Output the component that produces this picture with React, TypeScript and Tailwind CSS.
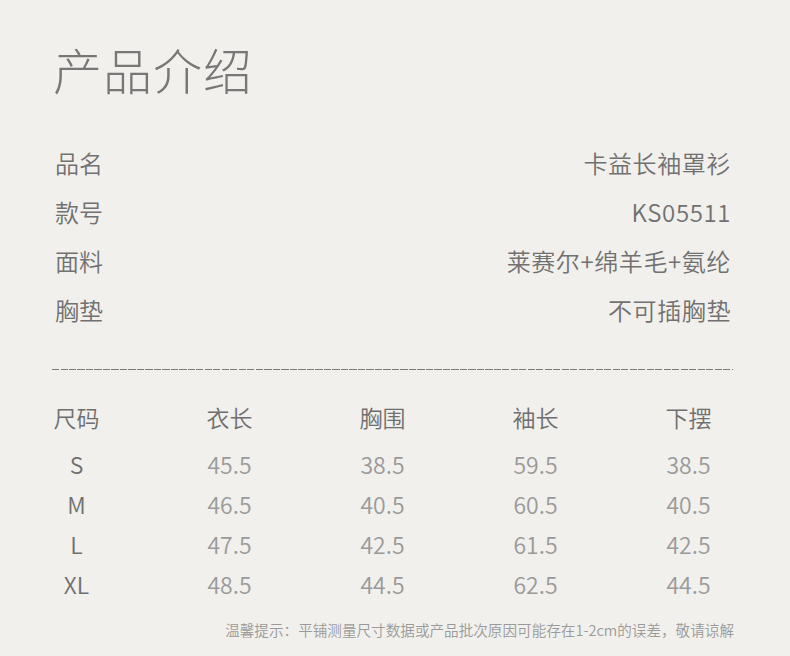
const info = [
  { label: "品名", value: "卡益长袖罩衫" },
  { label: "款号", value: "KS05511" },
  { label: "面料", value: "莱赛尔+绵羊毛+氨纶" },
  { label: "胸垫", value: "不可插胸垫" },
];

const headers = ["尺码", "衣长", "胸围", "袖长", "下摆"];

const sizes = [
  ["S", "45.5", "38.5", "59.5", "38.5"],
  ["M", "46.5", "40.5", "60.5", "40.5"],
  ["L", "47.5", "42.5", "61.5", "42.5"],
  ["XL", "48.5", "44.5", "62.5", "44.5"],
];

export default function App() {
  return (
    <div
      className="h-[656px] w-[790px] overflow-hidden bg-[#f1f0ec] font-[350]"
      style={{ fontFamily: '"Noto Sans CJK SC", "Noto Sans", sans-serif' }}
    >
      {/* Title */}
      <h1 className="pl-[53px] pt-[45px] text-[49px] font-light leading-[48px] tracking-[1px] text-[#777777]">
        产品介绍
      </h1>

      {/* Product info */}
      <div className="mt-[45px] pl-[55px] pr-[59px]">
        {info.map((row) => (
          <div
            key={row.label}
            className="flex h-[49px] items-center justify-between text-[24px] text-[#717171]"
          >
            <span>{row.label}</span>
            <span className="tracking-[0.6px]">{row.value}</span>
          </div>
        ))}
      </div>

      {/* Dashed divider */}
      <div className="mx-[52px] mt-[35px] h-px w-[681px] bg-[repeating-linear-gradient(90deg,#7a7a7a_0px,#7a7a7a_7px,transparent_7px,transparent_8.5px)]" />

      {/* Size table */}
      <div className="mt-[27px] w-[765px]">
        <div className="grid h-[40px] grid-cols-5 items-center text-[23px] text-[#6f6f6f]">
          {headers.map((h) => (
            <span key={h} className="text-center">
              {h}
            </span>
          ))}
        </div>
        <div className="mt-[7px]">
          {sizes.map((r) => (
            <div key={r[0]} className="grid h-[40px] grid-cols-5 items-center text-[23px]">
              {r.map((c, i) => (
                <span
                  key={i}
                  className={`text-center ${i === 0 ? "text-[#6f6f6f]" : "text-[#9a9a9a]"}`}
                >
                  {c}
                </span>
              ))}
            </div>
          ))}
        </div>
      </div>

      {/* Footnote */}
      <p className="mt-[16px] pr-[56px] text-right text-[14.6px] leading-[20px] text-[#9a9a9a]">
        温馨提示：平铺测量尺寸数据或产品批次原因可能存在1-2cm的误差，敬请谅解
      </p>
    </div>
  );
}
